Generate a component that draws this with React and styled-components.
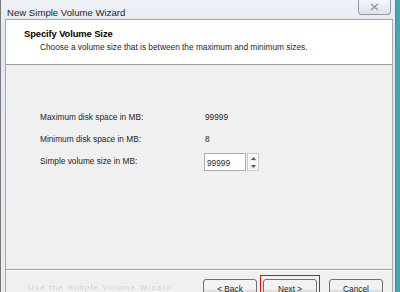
import styled, { createGlobalStyle } from "styled-components";

const Global = createGlobalStyle`
  html, body { margin: 0; padding: 0; }
  body {
    width: 400px;
    height: 292px;
    overflow: hidden;
    background: #3fa9b0;
    font-family: "Liberation Sans", Arial, sans-serif;
  }
`;

export default function App() {
  const rows = [
    { label: "Maximum disk space in MB:", value: "99999" },
    { label: "Minimum disk space in MB:", value: "8" },
  ];

  return (
    <>
      <Global />
      <Window>
        <TitleBar>
          <Title>New Simple Volume Wizard</Title>
          <CloseButton>
            <svg width="9" height="8" viewBox="0 0 9 8">
              <path d="M1 1 L8 7 M8 1 L1 7" stroke="#6b7280" strokeWidth="1.3" fill="none" />
              <path d="M1 1 L8 7 M8 1 L1 7" stroke="#fff" strokeWidth="0.4" fill="none" />
            </svg>
          </CloseButton>
        </TitleBar>
        <Client>
          <Header>
            <HeaderTitle>Specify Volume Size</HeaderTitle>
            <HeaderText>Choose a volume size that is between the maximum and minimum sizes.</HeaderText>
          </Header>
          <Body>
            {rows.map((r) => (
              <Row key={r.label}>
                <Label>{r.label}</Label>
                <Value>{r.value}</Value>
              </Row>
            ))}
            <Row>
              <Label>Simple volume size in MB:</Label>
              <Spin>
                <Input>99999</Input>
                <Arrows>
                  <ArrowBtn>
                    <svg width="5" height="3" viewBox="0 0 5 3"><path d="M0 3 L2.5 0 L5 3 Z" fill="#4a5a70" /></svg>
                  </ArrowBtn>
                  <ArrowBtn>
                    <svg width="5" height="3" viewBox="0 0 5 3"><path d="M0 0 L2.5 3 L5 0 Z" fill="#4a5a70" /></svg>
                  </ArrowBtn>
                </Arrows>
              </Spin>
            </Row>
          </Body>
          <Footer>
            <Ghost>Use the Simple Volume Wizard</Ghost>
            <Buttons>
              <Button>&lt; Back</Button>
              <Highlight>
                <Button>Next &gt;</Button>
              </Highlight>
              <Button $gap>Cancel</Button>
            </Buttons>
          </Footer>
        </Client>
      </Window>
    </>
  );
}

const Window = styled.div`
  width: 396px;
  height: 292px;
  overflow: hidden;
  background: linear-gradient(#eef2f7, #e3e9f1 30px, #e9edf2);
  border-left: 1px solid #7a7a7a;
  border-right: 1px solid #7a7a7a;
  box-sizing: border-box;
  display: flex;
  flex-direction: column;
`;

const TitleBar = styled.div`
  height: 22px;
  display: flex;
  align-items: flex-start;
  justify-content: space-between;
  padding: 0 4px 0 6px;
`;

const Title = styled.div`
  font-size: 9.6px;
  color: #1e1e1e;
  margin-top: 7px;
`;

const CloseButton = styled.div`
  width: 33px;
  height: 15px;
  box-sizing: border-box;
  border: 1px solid #8e98a6;
  border-top: none;
  border-radius: 0 0 4px 4px;
  background: linear-gradient(#f4f6f9, #dde3ea);
  display: flex;
  align-items: center;
  justify-content: center;
`;

const Client = styled.div`
  flex: 1;
  margin: 1px 0 0 4px;
  border: 1px solid #a5a9ae;
  border-bottom: none;
  background: #f0f0f0;
  display: flex;
  flex-direction: column;
  width: 388px;
  box-sizing: border-box;
`;

const Header = styled.div`
  height: 45px;
  background: #fff;
  border-bottom: 1px solid #a0a0a0;
  padding: 8px 0 0 18px;
  box-sizing: border-box;
`;

const HeaderTitle = styled.div`
  font-weight: bold;
  font-size: 9.4px;
  color: #000;
  letter-spacing: -0.1px;
`;

const HeaderText = styled.div`
  font-size: 8.3px;
  color: #1e1e1e;
  margin: 3px 0 0 16px;
`;

const Body = styled.div`
  height: 205px;
  border-bottom: 1px solid #a0a0a0;
  box-shadow: 0 1px 0 #fff;
  padding: 46px 0 0 34px;
  box-sizing: border-box;
  display: flex;
  flex-direction: column;
  gap: 11px;
`;

const Row = styled.div`
  display: flex;
  align-items: center;
  height: 11px;
`;

const Label = styled.div`
  width: 165px;
  font-size: 8.3px;
  color: #1e1e1e;
`;

const Value = styled.div`
  font-size: 8.3px;
  color: #1e1e1e;
`;

const Spin = styled.div`
  display: flex;
  gap: 1px;
  margin-left: -1px;
  margin-top: 3px;
`;

const Input = styled.div`
  width: 42px;
  height: 18px;
  box-sizing: border-box;
  border: 1px solid #abadb3;
  background: #fff;
  font-size: 8.3px;
  color: #1e1e1e;
  padding: 4px 0 0 2px;
`;

const Arrows = styled.div`
  width: 12px;
  height: 18px;
  display: flex;
  flex-direction: column;
  border: 1px solid #c8c8c8;
  box-sizing: border-box;
  background: #f2f2f2;
`;

const ArrowBtn = styled.div`
  flex: 1;
  display: flex;
  align-items: center;
  justify-content: center;
  background: linear-gradient(#fbfbfb, #e6e6e6);
  border: 1px solid #fff;
`;

const Footer = styled.div`
  flex: 1;
  position: relative;
  display: flex;
  justify-content: flex-end;
  padding: 9px 9px 0 0;
`;

const Ghost = styled.div`
  position: absolute;
  left: 22px;
  top: 13px;
  font-size: 8px;
  color: #b4b4b4;
  opacity: 0.55;
  filter: blur(0.5px);
  letter-spacing: 1.2px;
`;

const Buttons = styled.div`
  display: flex;
  align-items: flex-start;
  gap: 3px;
`;

const Highlight = styled.div`
  border: 1px solid #e01010;
  padding: 3px 2px;
  margin-top: -4px;
`;

const Button = styled.div`
  width: 54px;
  height: 22px;
  box-sizing: border-box;
  border: 1px solid #707070;
  border-radius: 3px;
  background: linear-gradient(#f2f2f2 45%, #dddddd 55%, #cfcfcf);
  font-size: 8.3px;
  color: #1e1e1e;
  text-align: center;
  padding-top: 4px;
  margin-left: ${(p) => (p.$gap ? "6px" : "0")};
`;
